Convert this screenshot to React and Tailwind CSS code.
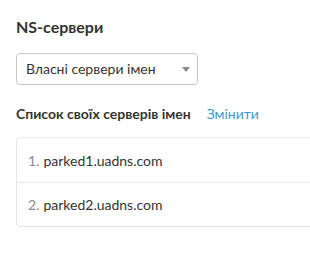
import React from 'react';

const servers = ['parked1.uadns.com', 'parked2.uadns.com'];

export default function App() {
  return (
    <div
      className="w-[310px] h-[259px] overflow-hidden bg-white pl-4 pt-[17px] text-[#333]"
      style={{ fontFamily: 'Lato, "Noto Sans", sans-serif' }}
    >
      <h2 className="text-[16px] leading-5 font-bold">NS-сервери</h2>

      <div className="mt-4 w-[182px] h-8 rounded border border-[#c8c8c8] flex items-center justify-between pl-[9px] pr-[6px]">
        <span className="text-[14px] leading-5">Власні сервери імен</span>
        <span className="w-0 h-0 border-l-4 border-r-4 border-t-[5px] border-l-transparent border-r-transparent border-t-[#8a8a8a] mr-[1px]" />
      </div>

      {/* Own servers */}
      <div className="mt-5 flex items-baseline gap-4">
        <h3 className="text-[14px] leading-[18px] font-bold">Список своїх серверів імен</h3>
        <button className="text-[14px] leading-[18px] text-[#3c97d3]">Змінити</button>
      </div>

      <div className="mt-[14px] w-[400px] rounded border border-[#e6e6e6]">
        {servers.map((s, i) => (
          <div
            key={s}
            className={`h-[44px] flex items-center pl-[11px] text-[14px] ${i > 0 ? 'border-t border-[#e6e6e6]' : ''}`}
          >
            <span className="text-[#8a8a8a] mr-1">{i + 1}.</span>
            <span>{s}</span>
          </div>
        ))}
      </div>
    </div>
  );
}
